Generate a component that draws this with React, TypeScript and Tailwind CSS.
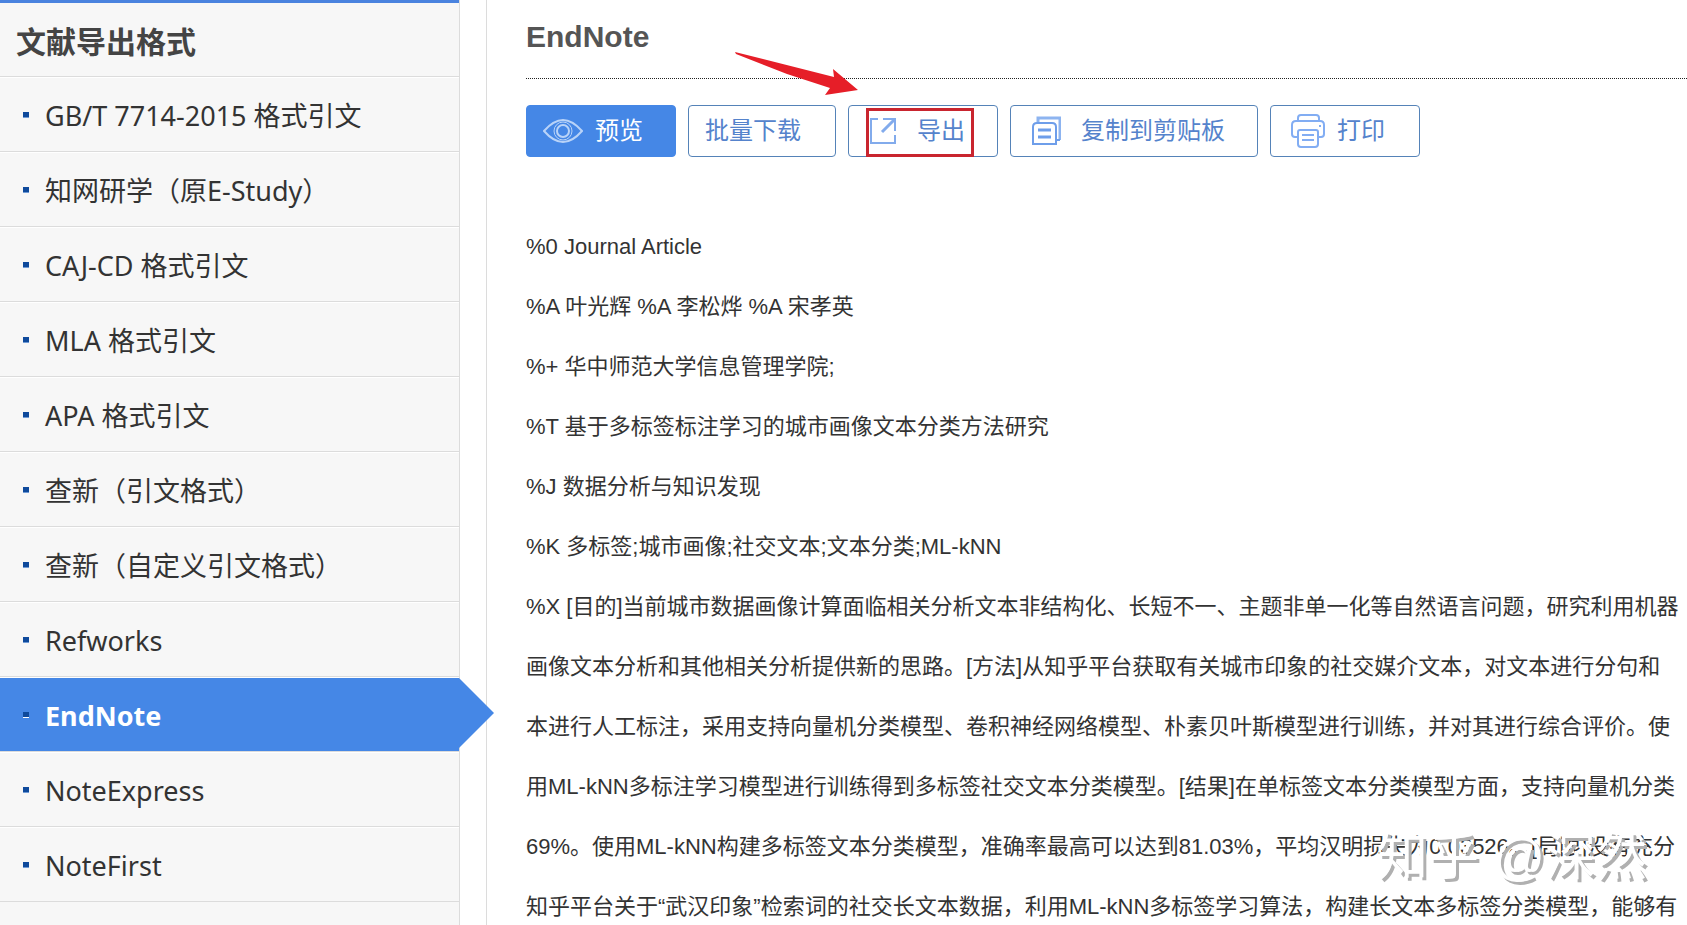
import { useState } from "react";
import type { ReactNode } from "react";
import clsx from "clsx";

const formats = [
    "GB/T 7714-2015 格式引文",
    "知网研学（原E-Study）",
    "CAJ-CD 格式引文",
    "MLA 格式引文",
    "APA 格式引文",
    "查新（引文格式）",
    "查新（自定义引文格式）",
    "Refworks",
    "EndNote",
    "NoteExpress",
    "NoteFirst",
];

const citationLines = [
    "%0 Journal Article",
    "%A 叶光辉 %A 李松烨 %A 宋孝英",
    "%+ 华中师范大学信息管理学院;",
    "%T 基于多标签标注学习的城市画像文本分类方法研究",
    "%J 数据分析与知识发现",
    "%K 多标签;城市画像;社交文本;文本分类;ML-kNN",
    "%X [目的]当前城市数据画像计算面临相关分析文本非结构化、长短不一、主题非单一化等自然语言问题，研究利用机器",
    "画像文本分析和其他相关分析提供新的思路。[方法]从知乎平台获取有关城市印象的社交媒介文本，对文本进行分句和",
    "本进行人工标注，采用支持向量机分类模型、卷积神经网络模型、朴素贝叶斯模型进行训练，并对其进行综合评价。使",
    "用ML-kNN多标注学习模型进行训练得到多标签社交文本分类模型。[结果]在单标签文本分类模型方面，支持向量机分类",
    "69%。使用ML-kNN构建多标签文本分类模型，准确率最高可以达到81.03%，平均汉明损失为0.03526。[局限]没有充分",
    "知乎平台关于“武汉印象”检索词的社交长文本数据，利用ML-kNN多标签学习算法，构建长文本多标签分类模型，能够有",
];

function EyeIcon() {
    return (
        <svg width="40" height="26" viewBox="0 0 40 26" fill="none" stroke="#b9d3f8" strokeWidth="2">
            <path d="M1 13C8 5 14 2 20 2s12 3 19 11c-7 8-13 11-19 11S8 21 1 13Z" />
            <circle cx="20" cy="13" r="9" strokeWidth="1" />
            <circle cx="20" cy="13" r="6" />
        </svg>
    );
}

function ExportIcon() {
    return (
        <svg width="28" height="28" viewBox="0 0 28 28" fill="none" stroke="#82abec" strokeWidth="2">
            <path d="M9 2H2v24h24v-8M14 2h12v12" />
            <path d="M25 3 13 15" strokeWidth="3" />
        </svg>
    );
}

function CopyIcon() {
    return (
        <svg width="30" height="30" viewBox="0 0 30 30" fill="none" stroke="#6e9eea" strokeWidth="2">
            <path d="M7 6V2h22v22" stroke="#8db4f0" strokeWidth="3" />
            <path d="M29 24h-3" />
            <path d="M6 7h15q4 0 4 4v17H2V11q0-4 4-4Z" />
            <path d="M7 14h13M7 21h13" strokeWidth="3" />
        </svg>
    );
}

function PrintIcon() {
    return (
        <svg width="34" height="34" viewBox="0 0 34 34" fill="none" stroke="#82adf3" strokeWidth="2">
            <path d="M7 7V4q0-3 3-3h15q3 0 3 3v3" />
            <path d="M6 23H4q-3 0-3-3v-9q0-4 4-4h24q4 0 4 4v9q0 3-3 3h-2" />
            <path d="M9 16h16q2 0 2 2v12q0 3-3 3H10q-3 0-3-3V18q0-2 2-2Z" />
            <path d="M11 21h12M11 26h12M29 11v2" />
        </svg>
    );
}

function ToolButton({ children, className }: { children: ReactNode; className?: string }) {
    return (
        <button
            type="button"
            className={clsx("flex h-13 shrink-0 items-center rounded border px-4 text-2xl whitespace-nowrap", className ?? "border-[#5583b8] bg-white text-[#5583cc]")}
        >
            {children}
        </button>
    );
}

export default function App() {
    const [active, setActive] = useState("EndNote");

    return (
        <div className="relative flex h-screen overflow-hidden bg-white font-['Liberation_Sans','Noto_Sans_CJK_SC',sans-serif] text-[#333]">
            <aside className="w-[460px] shrink-0 border-r border-[#dcdcdc] bg-[#f7f7f7] font-['Noto_Sans','Noto_Sans_CJK_SC',sans-serif]">
                <h2 className="flex h-[77px] items-center border-t-3 border-b border-t-[#4a83df] border-b-[#dcdcdc] px-4 pt-1 text-3xl font-bold text-[#444]">
                    文献导出格式
                </h2>
                <ul>
                    {formats.map((name) => (
                        <li key={name} className="relative h-[75px] border-t border-b border-t-white border-b-[#dcdcdc]">
                            <a
                                href="#"
                                onClick={() => setActive(name)}
                                className={clsx("flex h-full items-center gap-4 pt-1 pl-[23px] text-[27px]", active === name && "bg-[#4587e6] font-bold text-white")}
                            >
                                <span className={clsx("mb-1 size-[6px] border-b bg-[#0f4a9c]", active === name ? "border-white" : "border-[#6f9bd6]")} />
                                {name}
                            </a>
                            {active === name && (
                                <span className="absolute top-0 left-full h-[70px] w-[35px] bg-[#4587e6] [clip-path:polygon(0_0,100%_50%,0_100%)]" />
                            )}
                        </li>
                    ))}
                </ul>
            </aside>
            <div className="w-[27px] shrink-0 border-r border-[#dcdcdc]" />

            <main className="min-w-0 flex-1 pl-[39px]">
                <h1 className="flex h-[79px] items-center border-b border-dotted border-[#222] pb-1 text-3xl font-bold text-[#555]">
                    EndNote
                </h1>
                <div className="mt-[26px] flex gap-3">
                    <ToolButton className="w-[150px] gap-3 border-[#4587e6] bg-[#4587e6] text-white">
                        <EyeIcon />
                        预览
                    </ToolButton>
                    <ToolButton>
                        <span className="w-[114px] text-left">批量下载</span>
                    </ToolButton>
                    <div className="relative">
                        <ToolButton>
                            <span className="flex w-[116px] items-center gap-5 pl-1">
                                <ExportIcon />
                                导出
                            </span>
                        </ToolButton>
                        <span className="pointer-events-none absolute top-[3px] left-[18px] h-[49px] w-[108px] border-3 border-[#c9252f]" />
                        <svg className="pointer-events-none absolute -top-[53px] -left-[113px]" width="124" height="44" viewBox="0 0 124 44">
                            <path d="M0 0 99 25 98 17 123 38 90 43 95 36 52 22 1 2Z" fill="#e61e28" />
                        </svg>
                    </div>
                    <ToolButton>
                        <span className="flex w-[214px] items-center gap-5 pl-1">
                            <CopyIcon />
                            复制到剪贴板
                        </span>
                    </ToolButton>
                    <ToolButton>
                        <span className="flex w-[116px] items-center gap-3 pl-1">
                            <PrintIcon />
                            打印
                        </span>
                    </ToolButton>
                </div>

                <div className="mt-[60px] text-[22px] leading-[60px] whitespace-nowrap">
                    {citationLines.map((line) => (
                        <p key={line}>{line}</p>
                    ))}
                </div>
            </main>

            <div className="pointer-events-none absolute right-[40px] bottom-[42px] text-[51px] leading-none text-white [text-shadow:3px_3px_0_#b0b0b0]">
                知乎 @深然
            </div>
        </div>
    );
}
